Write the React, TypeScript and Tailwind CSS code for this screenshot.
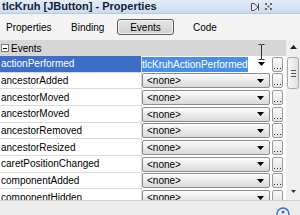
import React from "react"

const events = [
  "actionPerformed",
  "ancestorAdded",
  "ancestorMoved",
  "ancestorMoved",
  "ancestorRemoved",
  "ancestorResized",
  "caretPositionChanged",
  "componentAdded",
  "componentHidden",
]

function Arrow() {
  return (
    <svg width="7" height="4" viewBox="0 0 7 4" className="shrink-0">
      <path d="M0 0h7L3.5 4z" fill="#000" />
    </svg>
  )
}

function DotsButton({ dots = true }: { dots?: boolean }) {
  return (
    <div className="ml-[2px] flex h-[15px] w-[11px] shrink-0 items-end justify-center rounded-[2px] border border-[#9a9a9a] bg-gradient-to-b from-[#fafafa] to-[#e2e2e2] pb-[2px]">
      {dots && (
        <svg width="7" height="1" viewBox="0 0 7 1">
          <rect x="0" y="0" width="1" height="1" fill="#333" />
          <rect x="3" y="0" width="1" height="1" fill="#333" />
          <rect x="6" y="0" width="1" height="1" fill="#333" />
        </svg>
      )}
    </div>
  )
}

export default function App() {
  return (
    <div className="relative flex h-[215px] w-[300px] flex-col overflow-hidden bg-white font-['Liberation_Sans',Arial,sans-serif] text-[10px] text-black">
      {/* title bar */}
      <div className="flex h-[14px] shrink-0 items-center justify-between border-b border-[#b9c9dd] bg-gradient-to-b from-[#e4edf7] to-[#cbdcef] pl-[2px] pr-[28px]">
        <span className="text-[11px] font-bold leading-none text-[#14213d]">tlcKruh [JButton] - Properties</span>
        <div className="flex items-center gap-[5px]">
          <svg width="9" height="8" viewBox="0 0 9 8">
            <path d="M0.5 0.5h2.5l4 3.5-4 3.5H0.5z" fill="#e8eef5" stroke="#4a4a4a" strokeWidth="1" />
            <path d="M7.5 0.5v7" stroke="#4a4a4a" strokeWidth="1" />
          </svg>
          <svg width="7" height="7" viewBox="0 0 7 7">
            <path d="M0 0h2v2H0zM5 0h2v2H5zM2.5 2.5h2v2h-2zM0 5h2v2H0zM5 5h2v2H5z" fill="#6a6a6a" />
          </svg>
        </div>
      </div>

      {/* tabs */}
      <div className="flex h-[26px] shrink-0 items-center bg-[#f4f4f4] text-[10px]">
        <span className="ml-[6px] w-[65px]">Properties</span>
        <span className="w-[46px]">Binding</span>
        <div className="flex h-[16px] w-[57px] items-center justify-center rounded-[3px] border border-[#5a5a5a] bg-gradient-to-b from-[#e6e6e6] to-[#cfcfcf] shadow-[inset_0_0_0_1px_#f2f2f2]">
          Events
        </div>
        <span className="ml-[19px]">Code</span>
      </div>

      {/* sheet */}
      <div className="flex h-[160px] shrink-0">
        <div className="flex min-w-0 flex-1 flex-col overflow-hidden">
          <div className="flex h-[16px] shrink-0 items-center gap-[2px] bg-[#d6d6d6] pl-[1px]">
            <div className="flex h-[8px] w-[8px] items-center justify-center border border-[#7a7a7a] bg-white">
              <div className="h-px w-[4px] bg-black" />
            </div>
            <span>Events</span>
          </div>
          {events.map((name, i) => {
            const sel = i === 0
            return (
              <div key={i} className="flex h-[16.67px] shrink-0">
                <div
                  className={`flex w-[142px] shrink-0 items-center border-r border-b border-[#d9d9d9] pl-px ${
                    sel ? "bg-[#3d6fc6] text-white" : "bg-white"
                  }`}
                >
                  {name}
                </div>
                <div className="flex min-w-0 flex-1 items-center bg-white pr-[3px]">
                  {sel ? (
                    <div className="flex h-[16px] flex-1 items-center bg-white pr-[5px]">
                      <span className="bg-[#4a8fe6] text-white">tlcKruhActionPerformed</span>
                      <div className="flex-1" />
                      <Arrow />
                    </div>
                  ) : (
                    <div className="flex h-[15px] flex-1 items-center rounded-[2px] border border-[#8c8c8c] bg-gradient-to-b from-[#fdfdfd] to-[#d9d9d9] pl-[4px] pr-[5px]">
                      <span className="flex-1">&lt;none&gt;</span>
                      <Arrow />
                    </div>
                  )}
                  <DotsButton dots={i < 8} />
                </div>
              </div>
            )
          })}
        </div>

        {/* scrollbar */}
        <div className="flex w-[14px] shrink-0 flex-col items-center bg-[#efefef]">
          <svg width="7" height="4" viewBox="0 0 7 4" className="mt-[5px]">
            <path d="M0 4h7L3.5 0z" fill="#222" />
          </svg>
          <div className="mt-[8px] flex h-[32px] w-[12px] flex-col items-center justify-center gap-[2px] rounded-[3px] border border-[#a8a8a8] bg-gradient-to-r from-[#f8f8f8] to-[#e0e0e0]">
            <div className="h-px w-[5px] bg-[#555]" />
            <div className="h-px w-[5px] bg-[#555]" />
            <div className="h-px w-[5px] bg-[#555]" />
          </div>
          <div className="flex-1" />
          <svg width="5" height="3" viewBox="0 0 5 3" className="mb-[7px]">
            <path d="M0 0h5L2.5 3z" fill="#333" />
          </svg>
        </div>
      </div>

      {/* footer */}
      <div className="relative flex-1 border-t border-[#d0d0d0] bg-[#ececec]">
        <svg width="14" height="14" viewBox="0 0 14 14" className="absolute left-[276px] top-[6px]">
          <circle cx="7" cy="7" r="6" fill="#eaf1fb" stroke="#3a6fd0" strokeWidth="1.5" />
          <circle cx="7" cy="5" r="1.5" fill="#3a6fd0" />
        </svg>
      </div>

      {/* mouse I-beam cursor */}
      <svg width="7" height="16" viewBox="0 0 7 16" className="absolute left-[258px] top-[44px]">
        <path d="M0.5 0.5h2.5M4 0.5h2.5M3.5 1v14M0.5 15.5h2.5M4 15.5h2.5" stroke="#333" strokeWidth="1" />
        <path d="M3 1h1M3 15h1" stroke="#333" />
      </svg>
    </div>
  )
}
